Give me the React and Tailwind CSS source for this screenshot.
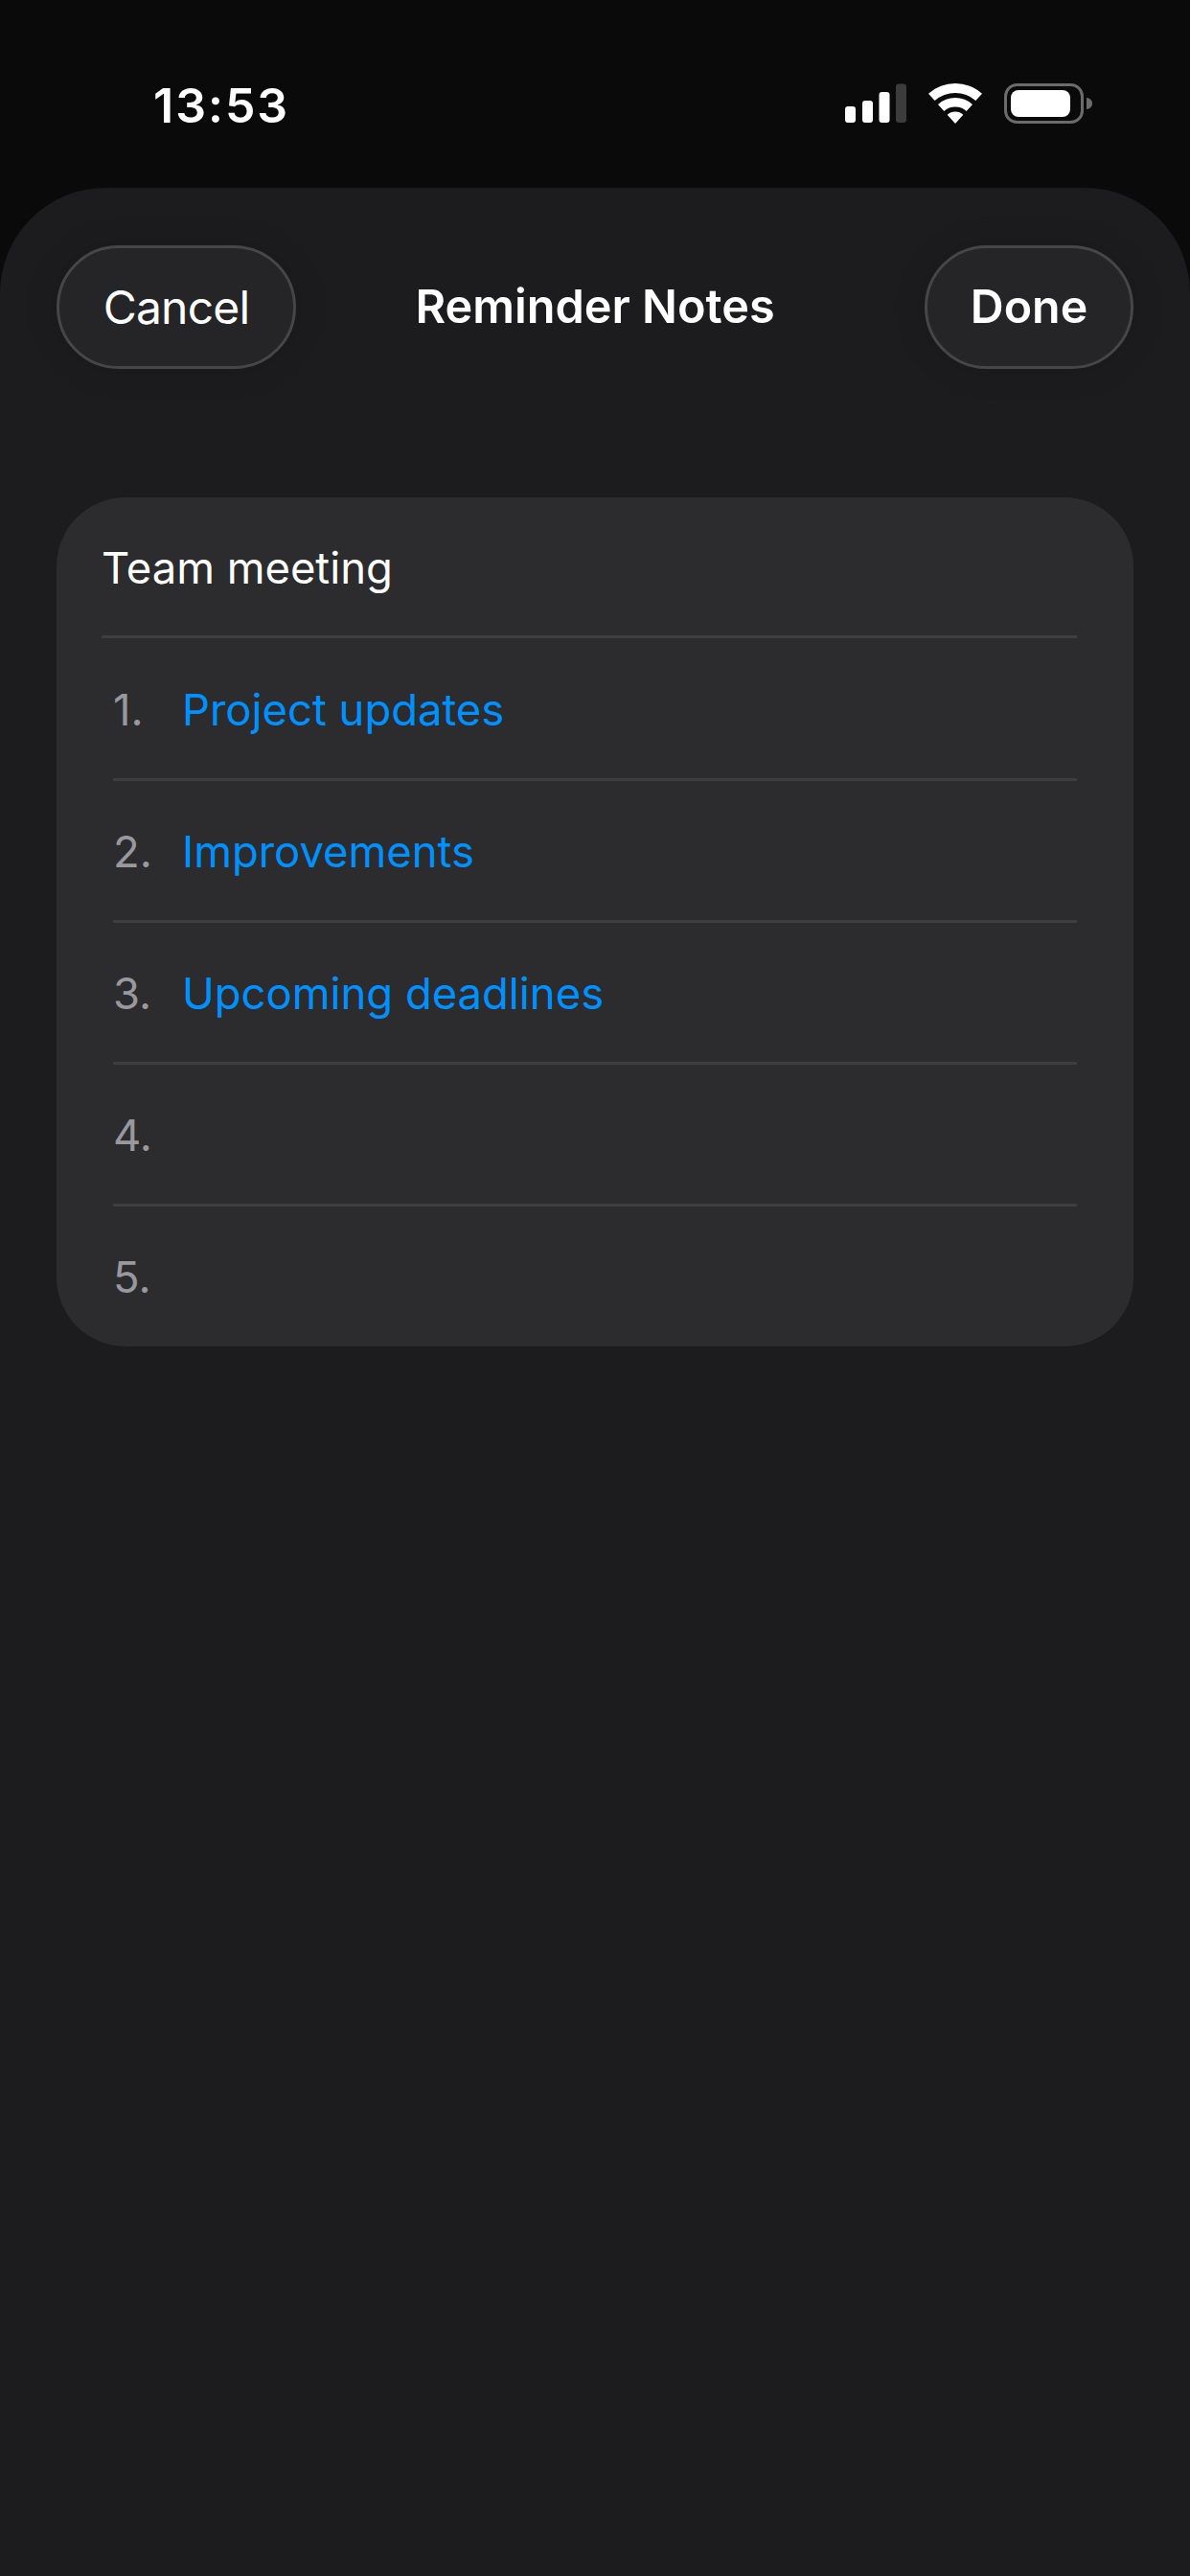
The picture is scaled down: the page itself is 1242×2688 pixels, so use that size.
import React from "react";

const rows = [
  { id: 1, text: "Project updates" },
  { id: 2, text: "Improvements" },
  { id: 3, text: "Upcoming deadlines" },
  { id: 4, text: "" },
  { id: 5, text: "" },
];

const StatusIcons = () => (
  <div className="flex items-center gap-[23px]">
    {/* Signal */}
    <svg width="64" height="42" viewBox="0 0 64 42">
      <rect x="0" y="24" width="11" height="17" rx="3" fill="#fff" />
      <rect x="18" y="18" width="11" height="23" rx="3" fill="#fff" />
      <rect x="35.5" y="9" width="11" height="32" rx="3" fill="#fff" />
      <rect x="53" y="0.5" width="11" height="40.5" rx="3" fill="#3c3c3c" />
    </svg>
    {/* Wifi */}
    <svg width="56" height="42" viewBox="0 0 56 42">
      <path d="M0 10.7A42 42 0 0 1 56 10.7L49.3 18.1A32 32 0 0 0 6.7 18.1Z" fill="#fff" />
      <path d="M10 21.9A27 27 0 0 1 46 21.9L39.7 29A17.5 17.5 0 0 0 16.3 29Z" fill="#fff" />
      <path d="M19.7 32.7A12.5 12.5 0 0 1 36.3 32.7L28 42Z" fill="#fff" />
    </svg>
    {/* Battery */}
    <svg width="92" height="42" viewBox="0 0 92 42">
      <rect x="1.5" y="1.5" width="80" height="39" rx="12" fill="none" stroke="#6b6b6b" strokeWidth="3" />
      <rect x="7" y="7" width="62" height="28" rx="8" fill="#fff" />
      <path d="M86 15C90 15.500 92 18 92 21C92 24 90 26.500 86 27Z" fill="#6b6b6b" />
    </svg>
  </div>
);

const NavButton = ({ label, className }) => (
  <button
    className={`h-[129px] rounded-full border-[3px] border-[#464649] bg-[#252527] text-white shadow-[0_0_36px_rgba(0,0,0,0.12)] ${className}`}
  >
    {label}
  </button>
);

export default function App() {
  return (
    <div className="min-h-[2688px] bg-[#0a0a0a] font-['Inter',sans-serif]">
      {/* Status bar */}
      <div className="flex h-[196px] items-start justify-between pl-[160px] pr-[102px] pt-[87px]">
        <span className="text-[50px] font-semibold leading-[46px] tracking-[2px] text-white">13:53</span>
        <StatusIcons />
      </div>

      {/* Sheet */}
      <div className="h-[2492px] rounded-t-[110px] bg-[#1c1c1e] px-[59px] pt-[60px]">
        <div className="grid grid-cols-[1fr_auto_1fr] items-center">
          <div className="flex justify-start">
            <NavButton label="Cancel" className="w-[250px] text-[48px] font-normal tracking-[-0.8px]" />
          </div>
          <h1 className="text-[48.6px] font-semibold text-white">Reminder Notes</h1>
          <div className="flex justify-end">
            <NavButton label="Done" className="w-[218px] text-[48.300px] font-semibold" />
          </div>
        </div>

        <div className="mt-[134px] rounded-[72px] bg-[#2c2c2e] pb-[1px]">
          <div className="mx-[47px] flex h-[144px] items-center pt-[4px] text-[45.400px] text-white">
            Team meeting
          </div>
          <div className="ml-[47px] mr-[59px] h-[3px] bg-[#3e3e40]" />
          {rows.map((row, i) => (
            <div
              key={row.id}
              className={`mx-[59px] flex items-center text-[45.400px] ${i > 0 ? "h-[148px] border-t-[3px] border-[#3e3e40] pt-[3px]" : "h-[146px] pt-[5px]"}`}
            >
              <span className="w-[72px] text-[#98989e]">{row.id}.</span>
              <span className="text-[#0091ff]">{row.text}</span>
            </div>
          ))}
        </div>
      </div>
    </div>
  );
}
